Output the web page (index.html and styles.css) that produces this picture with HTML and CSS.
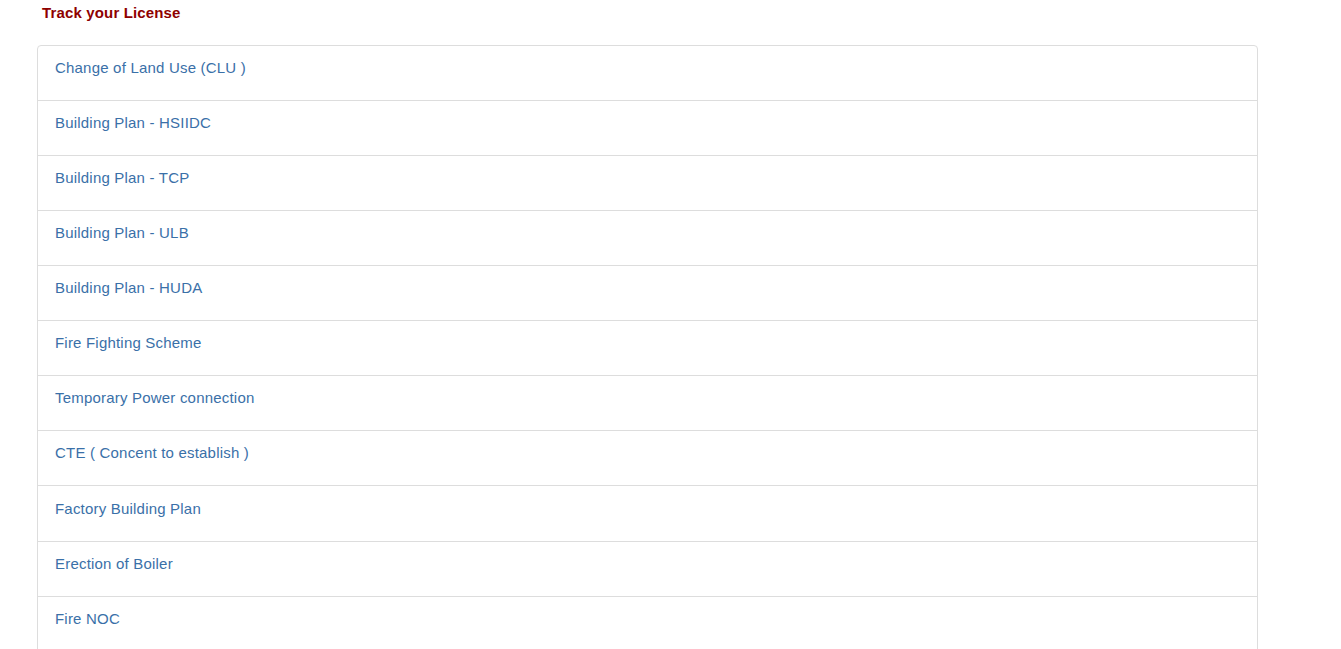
FILE: index.html
```html
<!DOCTYPE html>
<html>
<head>
<meta charset="utf-8">
<title>Track your License</title>
<link rel="stylesheet" href="styles.css">
</head>
<body>
<div class="page">
  <h4 class="title">Track your License</h4>
  <div class="list-group">
    <a class="list-item" href="#">Change of Land Use (CLU )</a>
    <a class="list-item" href="#">Building Plan - HSIIDC</a>
    <a class="list-item" href="#">Building Plan - TCP</a>
    <a class="list-item" href="#">Building Plan - ULB</a>
    <a class="list-item" href="#">Building Plan - HUDA</a>
    <a class="list-item" href="#">Fire Fighting Scheme</a>
    <a class="list-item" href="#">Temporary Power connection</a>
    <a class="list-item" href="#">CTE ( Concent to establish )</a>
    <a class="list-item tall" href="#">Factory Building Plan</a>
    <a class="list-item" href="#">Erection of Boiler</a>
    <a class="list-item" href="#">Fire NOC</a>
  </div>
</div>
</body>
</html>
```
FILE: styles.css
```css
html, body {
  margin: 0;
  padding: 0;
  background: #ffffff;
}

body {
  font-family: "Liberation Sans", Arial, sans-serif;
  font-size: 15px;
  line-height: 20px;
}

.page {
  padding: 3px 0 0 37px;
  width: 1221px;
}

.title {
  margin: 0 0 22px 5px;
  font-size: 15px;
  line-height: 20px;
  font-weight: bold;
  letter-spacing: 0.15px;
  color: #8e0000;
}

.list-group {
  display: flex;
  flex-direction: column;
}

.list-item {
  display: block;
  box-sizing: border-box;
  height: 56px;
  margin-bottom: -1px;
  padding: 12px 17px 0 17px;
  border: 1px solid #dddddd;
  background: #ffffff;
  color: #3a70a8;
  letter-spacing: 0.2px;
  text-decoration: none;
}

.list-item.tall {
  height: 57px;
  padding-top: 13px;
}

.list-item:first-child {
  border-top-left-radius: 4px;
  border-top-right-radius: 4px;
}
```
